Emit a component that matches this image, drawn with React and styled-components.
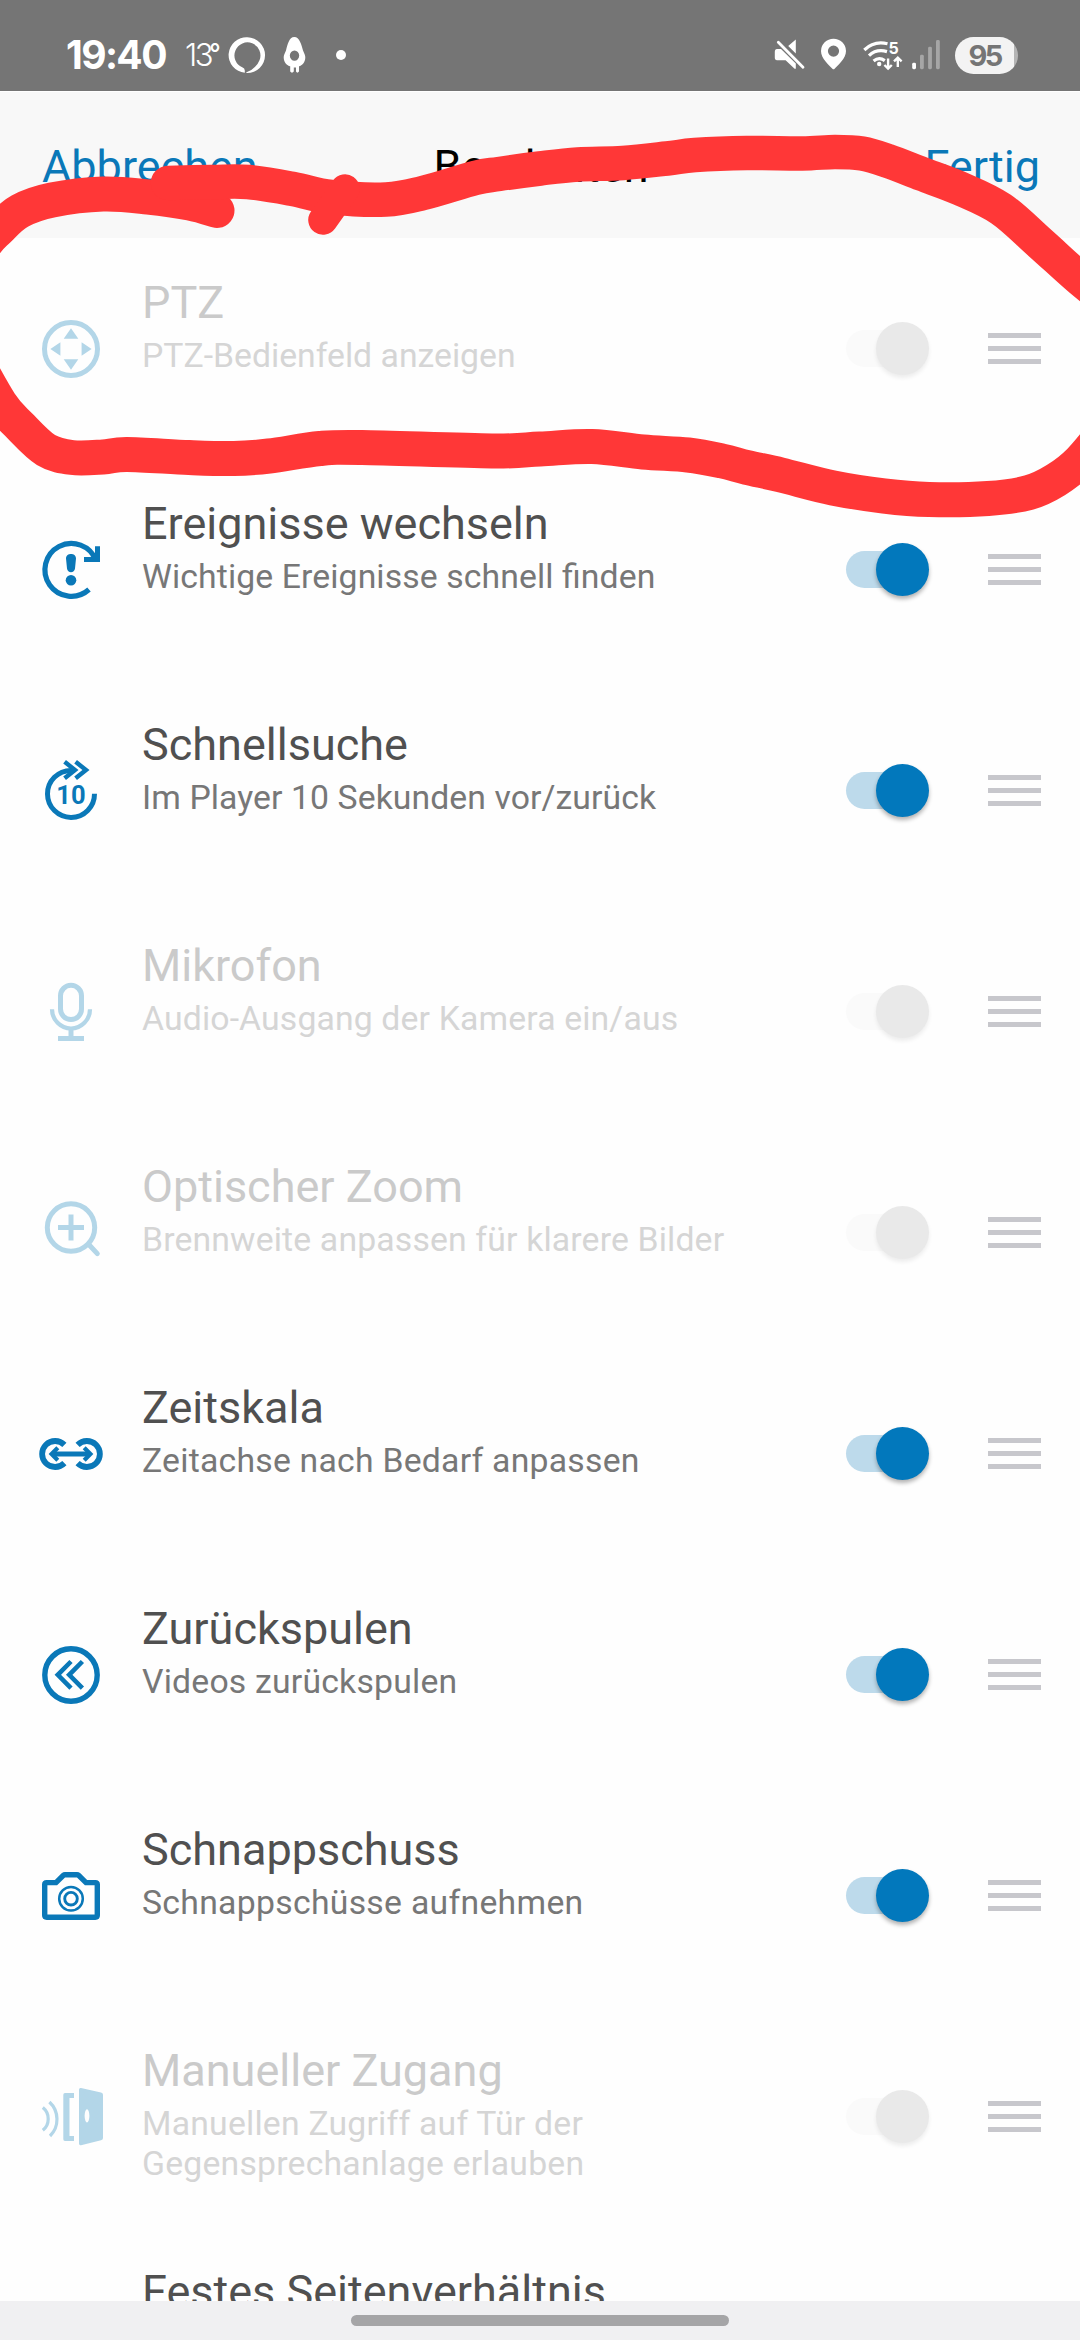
import React from 'react';
import styled, { createGlobalStyle } from 'styled-components';

const BLUE = '#0a78b8';
const RED = '#ff3737';

const GlobalStyle = createGlobalStyle`
  * {
    box-sizing: border-box;
  }
  html, body {
    margin: 0;
    padding: 0;
    overflow: hidden;
  }
  body {
    font-family: Roboto, "Liberation Sans", sans-serif;
    background: #fefefe;
  }
`;

/* ---------- row icons, all on a 72 x 72 grid ---------- */

const PtzIcon = () => (
  <>
    <circle cx="36" cy="36" r="26.5" fill="none" stroke="currentColor" strokeWidth="5" />
    <path
      fill="currentColor"
      d="M36 15.3 43.3 25.7H28.7ZM36 56.7 28.7 46.3H43.3ZM15.4 36 25.4 29.3V42.7ZM56.6 36 46.6 42.7V29.3Z"
    />
  </>
);

const EventIcon = () => (
  <>
    <path d="M54 55.5A26.4 26.4 0 1 1 61 26.5" fill="none" stroke="currentColor" strokeWidth="5.2" />
    <path d="M60 12.3H65V28H49V23H55.5L60 19Z" fill="currentColor" />
    <path d="M31 24.5C31 18.6 41 18.6 41 24.5L40 34.6C39.6 39.4 32.4 39.4 32 34.6Z" fill="currentColor" />
    <circle cx="36" cy="46.3" r="5.3" fill="currentColor" />
  </>
);

const SeekIcon = () => (
  <>
    <g fill="none" stroke="currentColor">
      <path d="M59.5 38.7A23.5 23.5 0 1 1 36 15.4H40" strokeWidth="5" />
      <path d="M29.6 6.8 40 15 29.6 23.3M40.6 6.8 51 15 40.6 23.3" strokeWidth="4.4" />
    </g>
    <text x="36" y="49.4" textAnchor="middle" fontSize="25.5" fontWeight="700" fill="currentColor">
      10
    </text>
  </>
);

const MicIcon = () => (
  <g fill="none" stroke="currentColor">
    <rect x="25.5" y="9.3" width="21" height="34.2" rx="10.5" strokeWidth="5" />
    <path d="M17 33.2A19 19.3 0 0 0 55 33.2" strokeWidth="4.2" />
    <path d="M36 52V62M23 62.4H49" strokeWidth="5" />
  </g>
);

const ZoomIcon = () => (
  <g fill="none" stroke="currentColor" strokeWidth="5">
    <circle cx="36" cy="30.5" r="23.7" />
    <path d="M36 17.5V43.5M23 30.5H49" />
    <path d="M54.5 48.3 62.3 56.6" strokeLinecap="round" />
  </g>
);

const TimescaleIcon = () => (
  <g fill="none" stroke="currentColor">
    <path d="M29.4 26.9A13 13 0 1 0 29.4 45.1M42.6 26.9A13 13 0 1 1 42.6 45.1" strokeWidth="5.8" />
    <path d="M17 36H55" strokeWidth="5" />
    <path d="M22.8 29.8 16.6 36 22.8 42.2M49.2 29.8 55.4 36 49.2 42.2" strokeWidth="4.2" />
  </g>
);

const RewindIcon = () => (
  <g fill="none" stroke="currentColor">
    <circle cx="36" cy="36" r="26.2" strokeWidth="5.4" />
    <path d="M36 22.5 22.8 35.8 36 49.1M47.4 22.5 34.2 35.8 47.4 49.1" strokeWidth="4.6" />
  </g>
);

const CameraIcon = () => (
  <g fill="none" stroke="currentColor">
    <path
      d="M9.7 24.5Q9.7 22.6 11.7 22.6H21L28.4 15.3Q29 14.8 30 14.8H42Q43 14.8 43.6 15.3L51 22.6H60.3Q62.3 22.6 62.3 24.5V55.3Q62.3 57.2 60.3 57.2H11.7Q9.7 57.2 9.7 55.3Z"
      strokeWidth="5.4"
    />
    <circle cx="36" cy="38.7" r="11.8" strokeWidth="2.5" />
    <circle cx="36" cy="38.7" r="6.3" strokeWidth="2.9" />
  </g>
);

const DoorIcon = () => (
  <>
    <path d="M7.8 26.6A14.5 14.5 0 0 1 7.8 49.2M14.4 21A23.5 23.5 0 0 1 15 55" fill="none" stroke="currentColor" strokeWidth="3.2" />
    <path d="M39 12V17H34.5V55H39V60H30Q28.3 60 28.3 58.3V13.7Q28.3 12 30 12Z" fill="currentColor" />
    <path
      fill="currentColor"
      fillRule="evenodd"
      d="M46 7 66 11.4Q68 11.9 68 13.7V57Q68 58.7 66 59.3L46 64.2Q44 64.6 44 62.6V8.8Q44 6.6 46 7ZM52 28.2A2.4 6.6 0 0 0 52 41.4A2.4 6.6 0 0 0 52 28.2Z"
    />
  </>
);

const ITEMS = [
  { icon: PtzIcon, title: 'PTZ', text: 'PTZ-Bedienfeld anzeigen', on: false, spacing: 0 },
  { icon: EventIcon, title: 'Ereignisse wechseln', text: 'Wichtige Ereignisse schnell finden', on: true, spacing: 0.1 },
  { icon: SeekIcon, title: 'Schnellsuche', text: 'Im Player 10 Sekunden vor/zurück', on: true, spacing: 0.08 },
  { icon: MicIcon, title: 'Mikrofon', text: 'Audio-Ausgang der Kamera ein/aus', on: false, spacing: 0.14 },
  { icon: ZoomIcon, title: 'Optischer Zoom', text: 'Brennweite anpassen für klarere Bilder', on: false, spacing: 0.16 },
  { icon: TimescaleIcon, title: 'Zeitskala', text: 'Zeitachse nach Bedarf anpassen', on: true, spacing: 0.23 },
  { icon: RewindIcon, title: 'Zurückspulen', text: 'Videos zurückspulen', on: true, spacing: 0.2 },
  { icon: CameraIcon, title: 'Schnappschuss', text: 'Schnappschüsse aufnehmen', on: true, spacing: 0.29 },
  {
    icon: DoorIcon,
    title: 'Manueller Zugang',
    text: 'Manuellen Zugriff auf Tür der Gegensprechanlage erlauben',
    on: false,
    spacing: 0.21,
  },
];

/* ---------- hand drawn marker ---------- */

const MARKER = [
  [-30, 300], [-18, 250], [0, 228], [20, 211], [52, 200], [103, 194], [148, 197], [190, 203], [217, 210.5],
];
const MARKER_TOP = [
  [168, 183], [213, 182], [248, 182], [293, 189], [331, 197], [386, 199.5], [423, 193], [475, 178],
  [499, 174], [540, 168.5], [578, 164.5], [623, 163], [667, 158.5], [695, 155], [747, 153], [802, 153.5],
  [835, 152], [862, 153.5], [888, 161], [922, 174], [960, 188.5], [1001, 209], [1040, 243], [1080, 279],
  [1115, 307],
];
const MARKER_BOTTOM = [
  [-30, 350], [0, 403], [20, 426], [46, 450], [72, 457.5], [103, 457], [127, 454.5], [189, 457.5],
  [234, 458.5], [269, 456], [320, 448.5], [362, 447.5], [492, 451], [540, 449], [592, 446.5], [643, 452],
  [688, 455], [722, 461], [747, 467.5], [781, 475], [833, 488], [884, 496], [929, 499.5], [988, 498.5],
  [1029, 492.5], [1056, 480], [1080, 461], [1110, 425],
];

// catmull-rom through the points, written as cubic segments
const smooth = (pts) =>
  pts.slice(1).reduce((d, p, i) => {
    const a = pts[i - 1] || pts[i];
    const b = pts[i];
    const c = pts[i + 2] || p;
    return `${d}C${b[0] + (p[0] - a[0]) / 6} ${b[1] + (p[1] - a[1]) / 6} ${p[0] - (c[0] - b[0]) / 6} ${
      p[1] - (c[1] - b[1]) / 6
    } ${p[0]} ${p[1]}`;
  }, `M${pts[0][0]} ${pts[0][1]}`);

const Marker = () => (
  <Styled.Marker viewBox="0 0 1080 600">
    <path d={smooth(MARKER)} strokeWidth="35" />
    <path d={smooth(MARKER_TOP)} strokeWidth="34.5" />
    <path d={smooth(MARKER_BOTTOM)} strokeWidth="35" />
    <path d="M323 220 345 189" strokeWidth="29.5" />
  </Styled.Marker>
);

/* ---------- status bar ---------- */

const StatusBar = () => (
  <Styled.StatusBar>
    <Styled.Clock>19:40</Styled.Clock>
    <Styled.Temp>
      13<span>°</span>
    </Styled.Temp>
    <svg width="48" height="40" viewBox="226 35 48 40">
      <path
        fill="#fff"
        fillRule="evenodd"
        d="M247.4 37.3A17.7 17.7 0 0 1 247 73Q246 73 246 72.6Q256.5 68.5 259.6 60A13 13 0 1 0 242.2 67.3Q244.8 68.3 244.8 70.5V72.8A17.8 17.8 0 0 1 247.4 37.3Z"
      />
    </svg>
    <svg width="38" height="40" viewBox="274 35 38 40">
      <path
        fill="#fff"
        fillRule="evenodd"
        d="M294.3 37C299.5 37 301.5 45 303 50.5C304.5 54 305.3 55.5 305.3 57.5C305.3 62.5 302 65.5 299 66.3V71.5Q297.3 73.8 296 71.5V67.5H293.8V71.5Q292 73.8 290.2 71.5V66.3C287 65.5 283.7 62.5 283.7 57.5C283.7 55.5 284.5 54 286 50.5C287.5 45 289 37 294.3 37ZM294.5 50.4A4.7 5.2 0 0 0 294.5 60.8A4.7 5.2 0 0 0 294.5 50.4Z"
      />
    </svg>
    <Styled.Dot />
    <Styled.Spacer />
    <svg width="36" height="40" viewBox="774 35 36 40">
      <path
        fill="#fff"
        d="M795.8 39.5V53.5L788.2 46ZM777 49H781L795.8 63.5V68.8H794.6L785.6 60.3H777Q774.8 60.3 774.8 57.5V52Q774.8 49 777 49Z"
      />
      <path d="M778.3 42.2 803 67.3" stroke="#fff" strokeWidth="2.8" strokeLinecap="round" />
    </svg>
    <svg width="50" height="40" viewBox="810 35 50 40">
      <path
        fill="#fff"
        fillRule="evenodd"
        d="M833.5 38.7A12.5 12.3 0 0 1 846 51C846 58.5 838 65 834.6 68.7Q833.5 69.8 832.4 68.7C829 65 821 58.5 821 51A12.5 12.3 0 0 1 833.5 38.7ZM833.5 45.5A5.6 5.6 0 0 0 833.5 56.7A5.6 5.6 0 0 0 833.5 45.5Z"
      />
    </svg>
    <svg width="46" height="40" viewBox="860 35 46 40">
      <g fill="none" stroke="#fff" strokeLinecap="butt">
        <path d="M864.3 50Q874 40.5 887.5 43.8" strokeWidth="3.2" />
        <path d="M869 55.6Q876.5 48.6 887 51.6" strokeWidth="3.2" />
        <path d="M873.6 61Q879 56.6 884.8 60.6" strokeWidth="3.2" />
        <path d="M888.1 58.5V68M884.4 65 888.1 68.6 891.8 65M897.8 67V58.5M894 61.3 897.8 57.6 901.6 61.3" strokeWidth="2.4" />
      </g>
      <circle cx="879.2" cy="64" r="2.2" fill="#fff" />
      <text x="888.4" y="54.3" fontFamily="Inter" fontSize="16" fontWeight="700" fill="#fff">
        5
      </text>
    </svg>
    <svg width="49" height="40" viewBox="906 35 49 40">
      <rect x="912.2" y="62.8" width="3.8" height="6.4" rx="1.4" fill="#fff" />
      <g fill="#a6a6a6">
        <rect x="920" y="54.8" width="3.8" height="14.4" rx="1.4" />
        <rect x="928.1" y="46.8" width="3.8" height="22.4" rx="1.4" />
        <rect x="936" y="40" width="3.8" height="29.2" rx="1.4" />
      </g>
    </svg>
    <Styled.Battery>95</Styled.Battery>
  </Styled.StatusBar>
);

const App = () => {
  return (
    <Styled.Screen>
      <GlobalStyle />
      <StatusBar />
      <Styled.Header>
        <Styled.HeaderLink>Abbrechen</Styled.HeaderLink>
        <Styled.HeaderTitle>Bearbeiten</Styled.HeaderTitle>
        <Styled.HeaderLink $right>Fertig</Styled.HeaderLink>
      </Styled.Header>
      <Styled.List>
        {ITEMS.map(({ icon: Icon, title, text, on, spacing }) => (
          <Styled.Row key={title}>
            <Styled.Icon viewBox="0 0 72 72" $on={on}>
              <Icon />
            </Styled.Icon>
            <Styled.Texts>
              <Styled.Title $on={on}>{title}</Styled.Title>
              <Styled.Text $on={on} $spacing={spacing}>
                {text}
              </Styled.Text>
            </Styled.Texts>
            <Styled.Switch $on={on}>
              <Styled.Thumb $on={on} />
            </Styled.Switch>
            <Styled.Handle>
              <i />
              <i />
              <i />
            </Styled.Handle>
          </Styled.Row>
        ))}
        <Styled.Row>
          <Styled.Icon viewBox="0 0 72 72" $on />
          <Styled.Texts>
            <Styled.Title $on>Festes Seitenverhältnis</Styled.Title>
          </Styled.Texts>
        </Styled.Row>
      </Styled.List>
      <Styled.NavBar>
        <Styled.NavPill />
      </Styled.NavBar>
      <Marker />
    </Styled.Screen>
  );
};

const Styled = {
  Screen: styled.div`
    position: relative;
    display: flex;
    flex-direction: column;
    width: 1080px;
    height: 2340px;
    overflow: hidden;
    background: #fefefe;
  `,
  StatusBar: styled.div`
    flex: none;
    display: flex;
    align-items: center;
    height: 91px;
    padding: 19px 62px 0 66px;
    background: #757575;
    color: #fff;
    font-family: Inter, sans-serif;
    svg {
      flex: none;
      display: block;
    }
  `,
  Clock: styled.div`
    width: 119px;
    font-size: 39px;
    font-weight: 700;
    line-height: 40px;
    letter-spacing: -1.6px;
    white-space: nowrap;
  `,
  Temp: styled.div`
    width: 41px;
    font-size: 31px;
    font-weight: 300;
    line-height: 40px;
    letter-spacing: -2.4px;
    white-space: nowrap;
    span {
      margin-left: -2px;
      font-size: 25px;
      font-weight: 500;
      line-height: 1;
      vertical-align: 4px;
    }
  `,
  Dot: styled.div`
    width: 10px;
    height: 10px;
    margin-left: 24px;
    border-radius: 50%;
    background: #fff;
  `,
  Spacer: styled.div`
    flex: 1;
  `,
  Battery: styled.div`
    width: 63px;
    height: 37px;
    padding-right: 4px;
    border-radius: 19px;
    background: linear-gradient(90deg, #f3f3f3 59px, #b4b4b4 59px);
    color: #757575;
    font-size: 29px;
    font-weight: 700;
    line-height: 37px;
    letter-spacing: -2.6px;
    text-align: center;
  `,
  Header: styled.div`
    flex: none;
    display: grid;
    grid-template-columns: 1fr auto 1fr;
    height: 147px;
    padding: 48px 40px 0 42px;
    border-top: 1px solid #fff;
    background: #f8f8f8;
    font-size: 45px;
    line-height: 53px;
  `,
  HeaderLink: styled.div`
    color: ${BLUE};
    text-align: ${({ $right }) => ($right ? 'right' : 'left')};
  `,
  HeaderTitle: styled.div`
    color: #000;
  `,
  List: styled.div`
    flex: 1;
    min-height: 0;
    overflow: hidden;
  `,
  Row: styled.div`
    display: flex;
    align-items: flex-start;
    height: 221px;
    padding: 0 39px 0 35px;
  `,
  Icon: styled.svg`
    flex: none;
    width: 72px;
    height: 72px;
    margin-top: 75px;
    color: ${({ $on }) => ($on ? BLUE : '#b3d6e8')};
  `,
  Texts: styled.div`
    flex: 1;
    padding: 38px 20px 0 35px;
  `,
  Title: styled.div`
    color: ${({ $on }) => ($on ? '#505050' : '#cacaca')};
    font-size: 45px;
    line-height: 53px;
    white-space: nowrap;
  `,
  Text: styled.div`
    margin-top: 7px;
    color: ${({ $on }) => ($on ? '#777' : '#d5d5d5')};
    font-size: 33.75px;
    line-height: 40px;
    letter-spacing: ${({ $spacing }) => $spacing}px;
    font-feature-settings: 'liga' 1;
  `,
  Switch: styled.div`
    flex: none;
    display: flex;
    align-items: center;
    justify-content: flex-end;
    width: 76px;
    height: 37px;
    margin: 92px 66px 0 0;
    border-radius: 19px;
    background: ${({ $on }) => ($on ? '#bddaeb' : '#fafafa')};
  `,
  Thumb: styled.div`
    flex: none;
    width: 53px;
    height: 53px;
    margin-right: -7px;
    border-radius: 50%;
    background: ${({ $on }) => ($on ? '#0278bc' : '#e9e9e9')};
    box-shadow: 0 3px 4px ${({ $on }) => ($on ? 'rgba(0, 0, 0, 0.3)' : 'rgba(0, 0, 0, 0.07)')};
  `,
  Handle: styled.div`
    flex: none;
    display: flex;
    flex-direction: column;
    gap: 8px;
    width: 53px;
    margin-top: 95px;
    i {
      height: 5px;
      background: #c7c7cc;
    }
  `,
  NavBar: styled.div`
    flex: none;
    display: flex;
    justify-content: center;
    height: 39px;
    padding-top: 14px;
    background: #f0f0f2;
  `,
  NavPill: styled.div`
    width: 378px;
    height: 11px;
    border-radius: 6px;
    background: #a5a5a7;
  `,
  Marker: styled.svg`
    position: absolute;
    top: 0;
    left: 0;
    width: 1080px;
    height: 600px;
    fill: none;
    stroke: ${RED};
    stroke-linecap: round;
    stroke-linejoin: round;
    pointer-events: none;
  `,
};

export default App;
